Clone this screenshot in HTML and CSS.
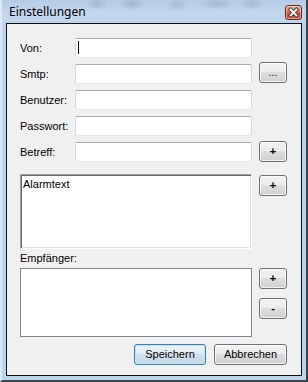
FILE: index.html
```html
<!DOCTYPE html>
<html>
<head>
<meta charset="utf-8">
<link rel="stylesheet" href="styles.css">
</head>
<body>
<div class="window">
  <div class="titlebar">
    <span class="title">Einstellungen</span>
    <div class="close">
      <svg width="17" height="15" viewBox="0 0 17 15">
        <path d="M5.5 4.5 L11.5 10.5 M11.5 4.5 L5.5 10.5" stroke="#3a3a3a" stroke-width="3.6" stroke-linecap="square" fill="none"/>
        <path d="M5.5 4.5 L11.5 10.5 M11.5 4.5 L5.5 10.5" stroke="#ffffff" stroke-width="1.8" stroke-linecap="square" fill="none"/>
      </svg>
    </div>
  </div>
  <div class="client">
    <div class="fields">
      <span class="lbl">Von:</span>
      <div class="textbox"><span class="caret"></span></div>
      <span></span>

      <span class="lbl">Smtp:</span>
      <div class="textbox"></div>
      <button class="btn btn-grid btn-dots">...</button>

      <span class="lbl">Benutzer:</span>
      <div class="textbox"></div>
      <span></span>

      <span class="lbl">Passwort:</span>
      <div class="textbox"></div>
      <span></span>

      <span class="lbl">Betreff:</span>
      <div class="textbox"></div>
      <button class="btn btn-grid btn-plus btn-up1">+</button>
    </div>

    <div class="alarm-row">
      <div class="memo">Alarmtext</div>
      <button class="btn btn-plus btn-side btn-down1">+</button>
    </div>

    <div class="lbl-empf">Empfänger:</div>

    <div class="list-row">
      <div class="listbox"></div>
      <div class="side-col">
        <button class="btn btn-plus btn-side">+</button>
        <button class="btn btn-plus btn-side">-</button>
      </div>
    </div>

    <div class="footer">
      <button class="btn btn-default btn-save">Speichern</button>
      <button class="btn btn-cancel">Abbrechen</button>
    </div>
  </div>
</div>
</body>
</html>
```
FILE: styles.css
```css
html, body {
  margin: 0;
  padding: 0;
}
body {
  width: 308px;
  height: 382px;
  overflow: hidden;
  font-family: "Liberation Sans", Arial, sans-serif;
  font-size: 11px;
  color: #000;
}
.window {
  box-sizing: border-box;
  width: 308px;
  height: 382px;
  display: flex;
  flex-direction: column;
  background: #bcd4ec;
  border-left: 2px solid #dde8f4;
  border-right: 2px solid #3b4550;
  border-bottom: 2px solid #3b4550;
}
.titlebar {
  flex: none;
  height: 23px;
  display: flex;
  align-items: flex-start;
  padding: 0 4px 0 7px;
  background:
    radial-gradient(ellipse 12px 6px at 95px 4px, rgba(120,140,165,0.35), rgba(120,140,165,0)),
    radial-gradient(ellipse 14px 6px at 130px 4px, rgba(120,140,165,0.35), rgba(120,140,165,0)),
    radial-gradient(ellipse 12px 6px at 175px 5px, rgba(120,140,165,0.3), rgba(120,140,165,0)),
    radial-gradient(ellipse 16px 6px at 215px 4px, rgba(120,140,165,0.35), rgba(120,140,165,0)),
    radial-gradient(ellipse 12px 6px at 250px 4px, rgba(120,140,165,0.3), rgba(120,140,165,0)),
    linear-gradient(#b4cce6, #c3d8ee 60%, #c0d6ee);
}
.title {
  margin-top: 4px;
  font-family: "Noto Sans", "Open Sans", sans-serif;
  font-size: 12px;
  line-height: 16px;
  color: #000;
}
.close {
  margin-left: auto;
  margin-top: 5px;
  box-sizing: border-box;
  width: 17px;
  height: 15px;
  border: 1px solid #6b2a20;
  border-radius: 3px;
  background: linear-gradient(#eab2a2, #d6755c 45%, #c4482c 55%, #d8654a);
  box-shadow: inset 0 0 0 1px rgba(255,220,210,0.5);
  overflow: hidden;
}
.close svg {
  display: block;
  margin: -1px 0 0 -1px;
}
.client {
  flex: 1;
  margin: 0 4px 4px 4px;
  border: 1px solid #111;
  background: #f0f0f0;
  padding: 14px 14px 10px 13px;
  display: flex;
  flex-direction: column;
}
.fields {
  display: grid;
  grid-template-columns: 55px 177px 35px;
  grid-auto-rows: 20px;
  column-gap: 0;
  row-gap: 6px;
}
.lbl {
  padding-top: 4px;
  line-height: 13px;
  white-space: nowrap;
}
.textbox {
  box-sizing: border-box;
  height: 20px;
  background: #fff;
  border: 1px solid;
  border-color: #abadb3 #d5d8de #e3e6ea #d5d8de;
  border-radius: 2px;
}
.caret {
  display: block;
  width: 1px;
  height: 13px;
  margin: 2px 0 0 2px;
  background: #000;
}
.btn {
  box-sizing: border-box;
  height: 21px;
  padding: 0;
  margin: 0;
  border: 1px solid #707070;
  border-radius: 3px;
  background: linear-gradient(#f3f3f3, #ececec 45%, #dedede 50%, #d0d0d0);
  box-shadow: inset 0 0 0 1px rgba(255,255,255,0.7);
  font-family: "Liberation Sans", Arial, sans-serif;
  font-size: 11px;
  line-height: 13px;
  color: #000;
}
.btn-grid {
  width: 28px;
  justify-self: end;
}
.btn-dots {
  margin-top: -2px;
  color: #301040;
}
.btn-plus {
  font-weight: bold;
}
.btn-up1 {
  margin-top: -1px;
}
.btn-side {
  width: 28px;
  flex: none;
}
.btn-down1 {
  margin-top: 1px;
}
.alarm-row {
  display: flex;
  align-items: flex-start;
  gap: 7px;
  margin-top: 12px;
  height: 75px;
}
.memo {
  box-sizing: border-box;
  width: 232px;
  height: 75px;
  flex: none;
  background: #fff;
  border: 1px solid;
  border-color: #a0a0a0 #ffffff #ffffff #a0a0a0;
  box-shadow: inset 1px 1px 0 #696969, inset -1px -1px 0 #e3e3e3;
  padding: 3px 0 0 2px;
  line-height: 13px;
}
.lbl-empf {
  margin-top: 3px;
  line-height: 13px;
  height: 13px;
}
.list-row {
  display: flex;
  align-items: flex-start;
  gap: 7px;
  margin-top: 3px;
}
.listbox {
  box-sizing: border-box;
  width: 232px;
  height: 69px;
  flex: none;
  background: #fff;
  border: 1px solid #828790;
}
.side-col {
  display: flex;
  flex-direction: column;
  gap: 9px;
}
.footer {
  display: flex;
  justify-content: flex-end;
  gap: 8px;
  margin-top: 7px;
}
.btn-save {
  width: 72px;
}
.btn-cancel {
  width: 73px;
}
.btn-default {
  border-color: #3c7fb1;
  background: linear-gradient(#edf4f9, #e2ecf4 45%, #d3e1ec 50%, #c7d8e6);
  box-shadow: inset 0 0 0 1px #bfe4f8;
}
```
